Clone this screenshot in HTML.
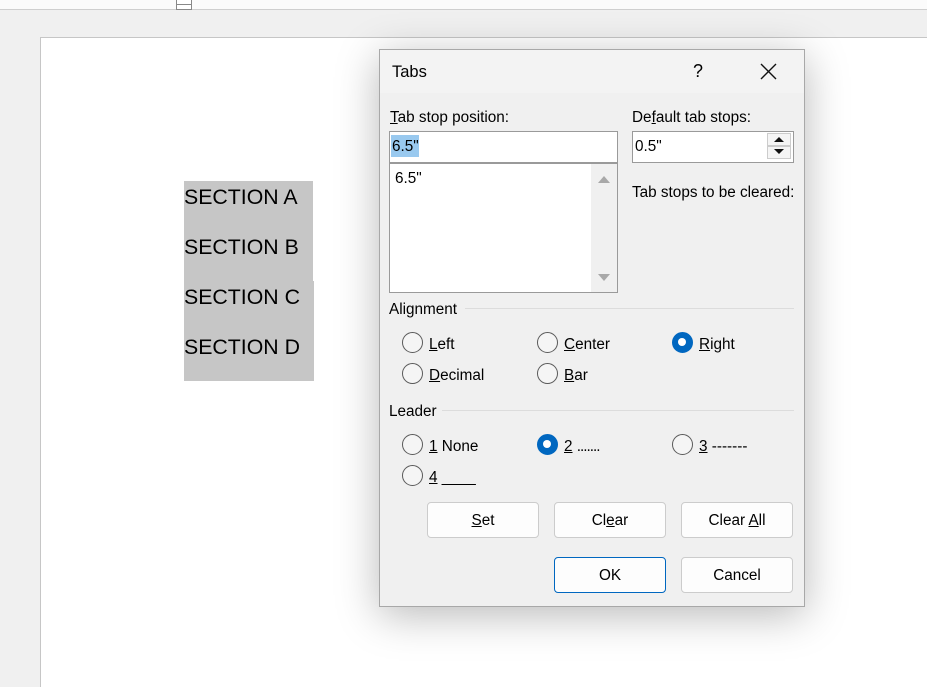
<!DOCTYPE html>
<html><head><style>
*{margin:0;padding:0;box-sizing:border-box}
html,body{width:927px;height:687px;overflow:hidden}
body{background:#f0f0f0;position:relative;font-family:"Liberation Sans",sans-serif;color:#000}
.a{position:absolute}
.t{position:absolute;font-size:15.3px;white-space:nowrap;line-height:18px}
u{text-decoration:underline}
.r{position:absolute;width:21px;height:21px;border:1.5px solid #5a5a5a;border-radius:50%;background:#f5f5f5}
.r.on{background:#0067c0;border-color:#0067c0}
.r.on:after{content:"";position:absolute;left:5px;top:5px;width:8px;height:8px;border-radius:50%;background:#fff}
.b{position:absolute;height:36px;width:112px;border:1px solid #ccc;background:#fdfdfd;border-radius:4px;font-size:15.3px;text-align:center;line-height:36px}
.s{position:absolute;font-size:21.3px;line-height:24px}
</style></head><body>
<div class="a" style="left:0;top:0;width:927px;height:10px;background:#fbfbfb;border-bottom:1px solid #cfcfcf"></div>
<div class="a" style="left:176px;top:0;width:16px;height:10px;border:1px solid #888;border-top:none;background:#fff"></div>
<div class="a" style="left:176px;top:4px;width:16px;height:1px;background:#888"></div>
<div class="a" style="left:40px;top:37px;width:900px;height:660px;background:#fff;border:1px solid #c6c6c6"></div>
<div class="a" style="left:184px;top:181px;width:129px;height:100px;background:#c6c6c6"></div>
<div class="a" style="left:184px;top:281px;width:130px;height:100px;background:#c6c6c6"></div>
<div class="s" style="left:184px;top:185px">SECTION A</div>
<div class="s" style="left:184px;top:235px">SECTION B</div>
<div class="s" style="left:184px;top:285px">SECTION C</div>
<div class="s" style="left:184px;top:335px">SECTION D</div>

<div class="a" style="left:379px;top:49px;width:426px;height:558px;background:#f0f0f0;border:1px solid #a8a8a8;box-shadow:0 8px 40px rgba(0,0,0,0.28)">
</div>
<div class="a" style="left:380px;top:50px;width:424px;height:43px;background:#f3f3f3"></div>
<div class="t" style="left:392px;top:63px;font-size:16.5px">Tabs</div>
<div class="t" style="left:693px;top:62px;font-size:18px">?</div>
<svg class="a" style="left:760px;top:63px" width="17" height="17"><path d="M1 1L16 16M16 1L1 16" stroke="#111" stroke-width="1.4"/></svg>

<div class="t" style="left:390px;top:109px"><u>T</u>ab stop position:</div>
<div class="a" style="left:389px;top:131px;width:229px;height:32px;background:#fff;border:1px solid #9a9a9a"></div>
<div class="a" style="left:391px;top:135px;width:28px;height:22px;background:#99c9ef"></div>
<div class="t" style="left:392px;top:138px">6.5"</div>
<div class="a" style="left:389px;top:163px;width:229px;height:130px;background:#fff;border:1px solid #9a9a9a"></div>
<div class="a" style="left:591px;top:164px;width:26px;height:128px;background:#f0f0f0"></div>
<svg class="a" style="left:597px;top:175px" width="14" height="110"><path d="M1 8L7 1L13 8Z" fill="#a8a8a8"/><path d="M1 99L13 99L7 106Z" fill="#a8a8a8"/></svg>
<div class="t" style="left:395px;top:170px">6.5"</div>

<div class="t" style="left:632px;top:109px">De<u>f</u>ault tab stops:</div>
<div class="a" style="left:632px;top:131px;width:162px;height:32px;background:#fff;border:1px solid #9a9a9a"></div>
<div class="a" style="left:767px;top:133px;width:24px;height:13px;background:#f5f5f5;border:1px solid #ccc"></div>
<div class="a" style="left:767px;top:146px;width:24px;height:13px;background:#f5f5f5;border:1px solid #ccc"></div>
<svg class="a" style="left:773px;top:136px" width="12" height="20"><path d="M1 6L6 1L11 6Z" fill="#111"/><path d="M1 13L11 13L6 18Z" fill="#111"/></svg>
<div class="t" style="left:635px;top:138px">0.5"</div>
<div class="t" style="left:632px;top:184px">Tab stops to be cleared:</div>

<div class="t" style="left:389px;top:301px">Alignment</div>
<div class="a" style="left:465px;top:308px;width:329px;height:1px;background:#dcdcdc"></div>
<div class="r" style="left:402px;top:332px"></div><div class="t" style="left:429px;top:336px"><u>L</u>eft</div>
<div class="r" style="left:537px;top:332px"></div><div class="t" style="left:564px;top:336px"><u>C</u>enter</div>
<div class="r on" style="left:672px;top:332px"></div><div class="t" style="left:699px;top:336px"><u>R</u>ight</div>
<div class="r" style="left:402px;top:363px"></div><div class="t" style="left:429px;top:367px"><u>D</u>ecimal</div>
<div class="r" style="left:537px;top:363px"></div><div class="t" style="left:564px;top:367px"><u>B</u>ar</div>

<div class="t" style="left:389px;top:403px">Leader</div>
<div class="a" style="left:442px;top:410px;width:352px;height:1px;background:#dcdcdc"></div>
<div class="r" style="left:402px;top:434px"></div><div class="t" style="left:429px;top:438px"><u>1</u> None</div>
<div class="r on" style="left:537px;top:434px"></div><div class="t" style="left:564px;top:438px"><u>2</u> <span style="letter-spacing:-1px">.......</span></div>
<div class="r" style="left:672px;top:434px"></div><div class="t" style="left:699px;top:438px"><u>3</u> -------</div>
<div class="r" style="left:402px;top:465px"></div><div class="t" style="left:429px;top:469px"><u>4</u> ____</div>

<div class="b" style="left:427px;top:502px"><u>S</u>et</div>
<div class="b" style="left:554px;top:502px">Cl<u>e</u>ar</div>
<div class="b" style="left:681px;top:502px">Clear <u>A</u>ll</div>
<div class="b" style="left:554px;top:557px;border-color:#0067c0">OK</div>
<div class="b" style="left:681px;top:557px">Cancel</div>
</body></html>
